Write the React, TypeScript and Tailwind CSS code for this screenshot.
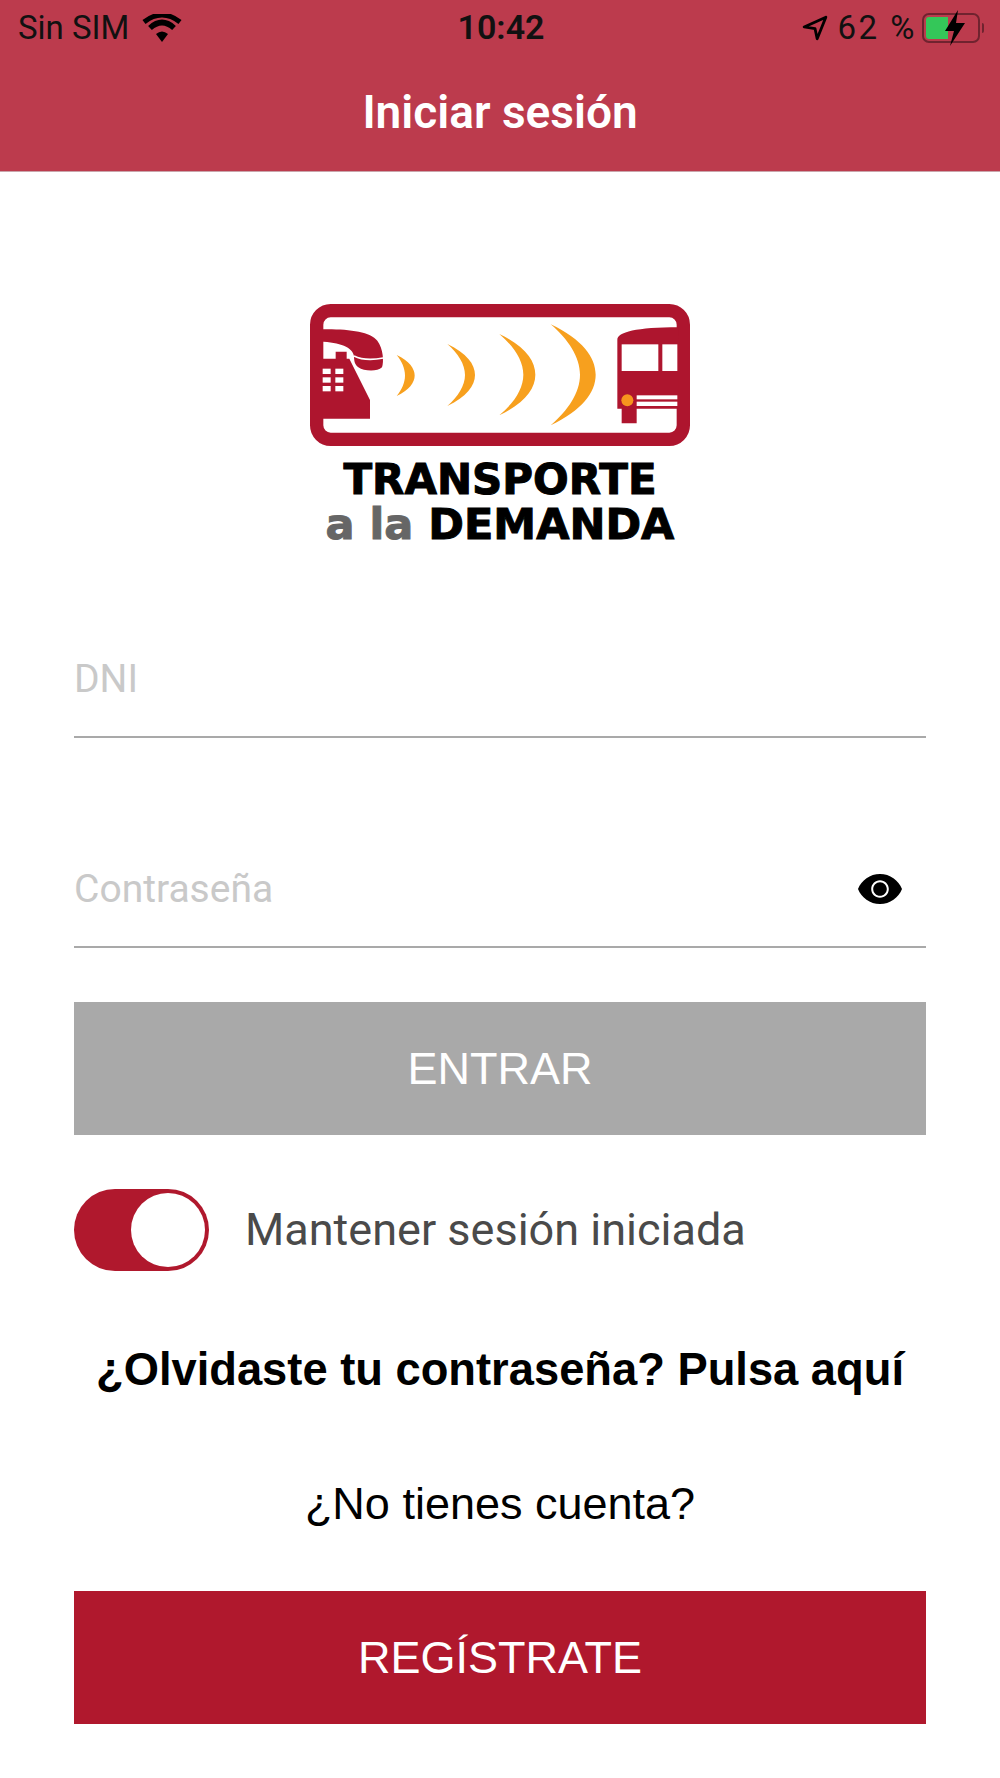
const RED = "#ae152e";
const ORANGE = "#f7a01e";

function crescent(x0: number, y0: number, y1: number, xo: number, xi: number) {
  const h = (y1 - y0) / 2;
  const ym = (y0 + y1) / 2;
  const w = xo - x0;
  const wi = xi - x0;
  return [
    `M${x0} ${y0}`,
    `C${x0 + 0.7 * w} ${y0 + 0.3 * h} ${xo} ${ym - 0.35 * h} ${xo} ${ym}`,
    `C${xo} ${ym + 0.35 * h} ${x0 + 0.7 * w} ${y1 - 0.3 * h} ${x0} ${y1}`,
    `C${x0 + 0.6 * wi} ${y1 - 0.3 * h} ${xi} ${ym + 0.35 * h} ${xi} ${ym}`,
    `C${xi} ${ym - 0.35 * h} ${x0 + 0.6 * wi} ${y0 + 0.3 * h} ${x0} ${y0}Z`,
  ].join(" ");
}

function Logo() {
  return (
    <svg width="420" height="174" viewBox="0 0 1260 522" className="block">
      <rect x="80" y="62" width="1100" height="386" rx="42" fill="none" stroke={RED} strokeWidth="40" />
      <path
        d="M90 118 C170 116 240 124 262 152 C280 176 282 215 276 232 C262 246 222 244 205 232 C194 224 192 212 192 198 C188 172 150 156 90 155 Z"
        fill={RED}
      />
      <path d="M192 198 C220 212 250 210 280 204" fill="none" stroke="#fff" strokeWidth="5" />
      <path d="M90 206 L137 206 L137 185 L170 185 L170 206 L178 206 L240 330 L240 386 L90 386 Z" fill={RED} />
      {[236, 262, 288].map((y) =>
        [98, 136].map((x) => <rect key={`${x}-${y}`} x={x} y={y} width="24" height="16" fill="#fff" />)
      )}
      <path d={crescent(320, 195, 318, 374, 345)} fill={ORANGE} />
      <path d={crescent(472, 162, 348, 555, 525)} fill={ORANGE} />
      <path d={crescent(628, 132, 376, 736, 700)} fill={ORANGE} />
      <path d={crescent(782, 103, 406, 917, 870)} fill={ORANGE} />
      <path d="M982 356 L982 150 C982 126 1040 112 1165 112 L1165 356 L1040 356 L1040 400 L995 400 L995 356 Z" fill={RED} />
      <rect x="995" y="163" width="110" height="80" fill="#fff" />
      <rect x="1117" y="163" width="45" height="80" fill="#fff" />
      <rect x="1040" y="316" width="122" height="12" fill="#fff" />
      <rect x="1040" y="335" width="122" height="13" fill="#fff" />
      <circle cx="1012" cy="331" r="18" fill="#f7941e" />
    </svg>
  );
}

function StatusBar() {
  return (
    <div className="flex h-[54px] items-center pl-[18px] pr-[16px] pt-[1px] text-[33px] text-[#111] [font-family:Roboto,sans-serif]">
      <div className="flex flex-1 items-center gap-[13px]">
        <span>Sin SIM</span>
        <svg width="40" height="28" viewBox="0 0 40 28">
          <path d="M20 28 L14 20 Q20 15 26 20 Z" fill="#000" />
          <path d="M8 14 Q20 3 32 14" fill="none" stroke="#000" strokeWidth="5.5" />
          <path d="M2 8 Q20 -6 38 8" fill="none" stroke="#000" strokeWidth="5" />
        </svg>
      </div>
      <span className="text-[34px] font-semibold">10:42</span>
      <div className="flex flex-1 items-center justify-end">
        <svg width="26" height="26" viewBox="0 0 24 24" className="mr-[10px]">
          <path d="M22 2 L2 11 L12 12.5 L14 22 Z" fill="none" stroke="#000" strokeWidth="2.6" strokeLinejoin="round" />
        </svg>
        <span className="mr-[5px] tracking-[2.5px]">62 %</span>
        <div className="relative flex h-[30px] w-[58px] items-stretch rounded-[7px] border-2 border-[#70232f] p-[2px]">
          <div className="w-[22px] rounded-l-[3px] bg-[#34c759]" />
          <svg width="24" height="36" viewBox="0 0 24 36" className="absolute left-[19px] top-[-5px]">
            <path d="M15 0 L2 21 L11 21 L7 36 L22 13 L13 13 Z" fill="#000" />
          </svg>
        </div>
        <div className="ml-[2px] h-[10px] w-[2px] rounded-r bg-[#70232f]" />
      </div>
    </div>
  );
}

function Field({ label, eye }: { label: string; eye?: boolean }) {
  return (
    <div className="flex h-[78px] items-start justify-between border-b-2 border-[#a9a9a9] [font-family:Roboto,sans-serif]">
      <span className="text-[39px] leading-[38px] text-[#c9c9c9]">{label}</span>
      {eye && (
        <svg width="48" height="48" viewBox="0 0 24 24" className="mr-[22px] mt-[-5px]">
          <path
            d="M12 4.5C7 4.5 2.73 7.61 1 12c1.73 4.39 6 7.5 11 7.5s9.27-3.11 11-7.5c-1.73-4.39-6-7.5-11-7.5zM12 16.4c-2.43 0-4.4-1.97-4.4-4.4s1.97-4.4 4.4-4.4 4.4 1.97 4.4 4.4-1.97 4.4-4.4 4.4zM12 8.6c-1.88 0-3.4 1.52-3.4 3.4s1.52 3.4 3.4 3.4 3.4-1.52 3.4-3.4-1.52-3.4-3.4-3.4z"
            fill="#000"
          />
        </svg>
      )}
    </div>
  );
}

export default function App() {
  return (
    <div className="h-[1778px] w-[1000px] overflow-hidden bg-white [font-family:'Liberation_Sans',Arial,sans-serif]">
      <header className="h-[172px] border-b border-[#c9a5ab] bg-[#bc3b4d]">
        <StatusBar />
        <h1 className="mt-[33px] text-center text-[46px] leading-[50px] font-semibold text-white [font-family:Roboto,sans-serif]">
          Iniciar sesión
        </h1>
      </header>

      <div className="flex flex-col items-center pt-[118px]">
        <Logo />
        <div className="mt-[-6px] text-center font-bold text-black [-webkit-text-stroke:1px_currentColor] [font-family:'DejaVu_Sans',sans-serif]">
          <div className="text-[42px] leading-[44px]">TRANSPORTE</div>
          <div className="text-[43px] leading-[44px]">
            <span className="text-[#666]">a la </span>DEMANDA
          </div>
        </div>
      </div>

      <div className="px-[74px]">
        <div className="mt-[114px]">
          <Field label="DNI" />
        </div>
        <div className="mt-[132px]">
          <Field label="Contraseña" eye />
        </div>

        <button className="mt-[54px] flex h-[133px] w-full items-center justify-center bg-[#a9a9a9] text-[45px] text-white">
          ENTRAR
        </button>

        <div className="mt-[54px] flex items-center gap-[36px]">
          <div className="flex h-[82px] w-[135px] items-center justify-end rounded-full bg-[#b0182d] pr-[4px]">
            <div className="h-[74px] w-[74px] rounded-full bg-white" />
          </div>
          <span className="text-[45px] leading-[50px] text-[#4a4a4a] [font-family:Roboto,sans-serif]">
            Mantener sesión iniciada
          </span>
        </div>

        <p className="mt-[74px] text-center text-[45.3px] leading-[50px] font-bold text-black">
          ¿Olvidaste tu contraseña? Pulsa aquí
        </p>
        <p className="mt-[84px] text-center text-[45px] leading-[50px] text-black">¿No tienes cuenta?</p>

        <button className="mt-[62px] flex h-[133px] w-full items-center justify-center bg-[#b0182d] text-[45px] text-white">
          REGÍSTRATE
        </button>
      </div>
    </div>
  );
}
